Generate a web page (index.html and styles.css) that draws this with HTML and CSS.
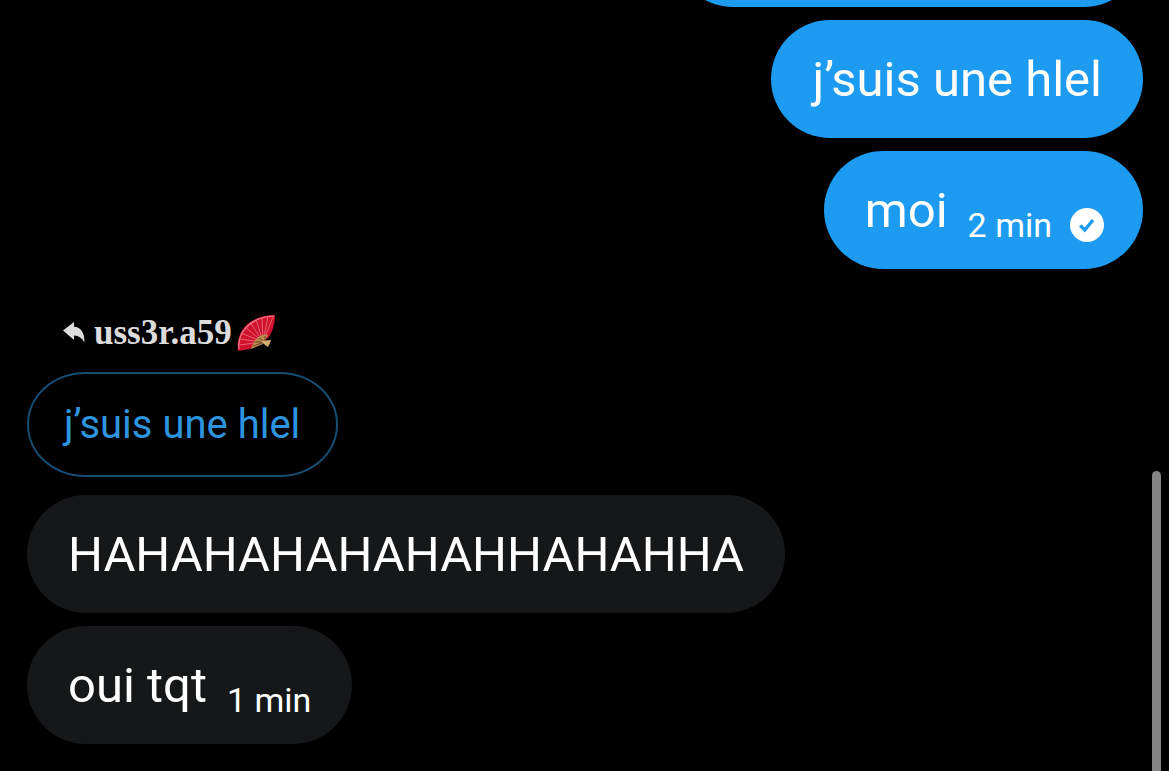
FILE: index.html
```html
<!DOCTYPE html>
<html lang="fr">
<head>
<meta charset="utf-8">
<title>Messages</title>
<link rel="stylesheet" href="styles.css">
</head>
<body>
<main class="thread">
  <div class="bubble sent earlier"></div>
  <div class="bubble sent">j’suis une hlel</div>
  <div class="bubble sent">
    <span>moi</span>
    <span class="time">2 min</span>
    <svg class="check" viewBox="0 0 34 34" role="img" aria-label="Envoyé">
      <circle cx="17" cy="17" r="17" fill="#fff"/>
      <path d="M10.2 17.6 L14.8 22 L23 12" fill="none" stroke="#1d9bf0" stroke-width="3.4"/>
    </svg>
  </div>
  <div class="reply-head">
    <svg class="reply-icon" viewBox="0 0 22 22" aria-hidden="true">
      <path d="M0 8.5 L11 0 V4.8 C18 5 21.5 10.5 21.5 20.5 C19 16 16 13.6 11 13.4 V18 Z" fill="#dcdcdc"/>
    </svg>
    <span class="name">uss3r.a59</span>
    <svg class="fan" viewBox="0 0 40 38" role="img" aria-label="éventail">
      <path d="M2 37 C-1 18 13 1 39 1 C39 10 36 19 32 24 L14 35 Z" fill="#d0122f"/>
      <path d="M3 35 C1 19 14 3 38 2" fill="none" stroke="#ee8290" stroke-width="1.2"/>
      <g stroke="#e8606f" stroke-width="1">
        <path d="M27 28 L3 31 M27 28 L3 25 M27 28 L5 19 M27 28 L9 13 M27 28 L14 8 M27 28 L20 5 M27 28 L26 3 M27 28 L32 2 M27 28 L37 3"/>
      </g>
      <path d="M32 21 C25 19 18 25 15 35 L27 30 Z" fill="#b98a50"/>
      <path d="M29 28 L17 32 M29 28 L19 28 M29 28 L23 24 M29 28 L29 22" stroke="#6f4428" stroke-width="1"/>
      <path d="M25 27 L35 26 L34 29 L32 33 L29 31 Z" fill="#d3ad70"/>
    </svg>
  </div>
  <div class="bubble quoted">j’suis une hlel</div>
  <div class="bubble received">HAHAHAHAHAHAHHAHAHHA</div>
  <div class="bubble received">
    <span>oui tqt</span>
    <span class="time">1 min</span>
  </div>
</main>
<div class="scroll-thumb"></div>
</body>
</html>
```
FILE: styles.css
```css
* {
  box-sizing: border-box;
}

body {
  margin: 0;
  background: #000;
  color: #fff;
  font-family: Roboto, "Noto Sans", sans-serif;
}

.thread {
  display: flex;
  flex-direction: column;
  justify-content: flex-end;
  align-items: flex-start;
  gap: 13px;
  height: 100vh;
  padding: 0 26px 27px 27px;
  overflow: hidden;
}

.bubble {
  display: flex;
  flex-shrink: 0;
  align-items: center;
  padding: 27px 41px 25px;
  border-radius: 60px;
  font-size: 49px;
  line-height: 66px;
}

.sent {
  align-self: flex-end;
  background: #1d9bf0;
}

.received {
  background: #161719;
}

.earlier {
  width: 42%;
  min-height: 118px;
}

.time {
  margin: 28px 0 0 20px;
  font-size: 34px;
  line-height: 38px;
}

.check {
  width: 34px;
  height: 34px;
  margin: 28px -2px 0 18px;
}

.reply-head {
  display: flex;
  flex-shrink: 0;
  align-items: center;
  margin-top: 32px;
  padding-left: 36px;
}

.reply-icon {
  width: 22px;
  height: 22px;
}

.name {
  margin: 0 4px 0 9px;
  color: #dcdcdc;
  font: bold 35px/38px "Liberation Serif", serif;
}

.fan {
  width: 40px;
  height: 38px;
}

.quoted {
  margin: 7px 0 5px;
  padding: 23px 36px 23px 35px;
  border: 2px solid #174c73;
  border-radius: 58px / 52px;
  color: #2f94df;
  font-size: 40px;
  line-height: 55px;
}

.scroll-thumb {
  position: fixed;
  top: 471px;
  right: 8px;
  bottom: -8px;
  width: 9px;
  border-radius: 5px;
  background: #848484;
}
```
